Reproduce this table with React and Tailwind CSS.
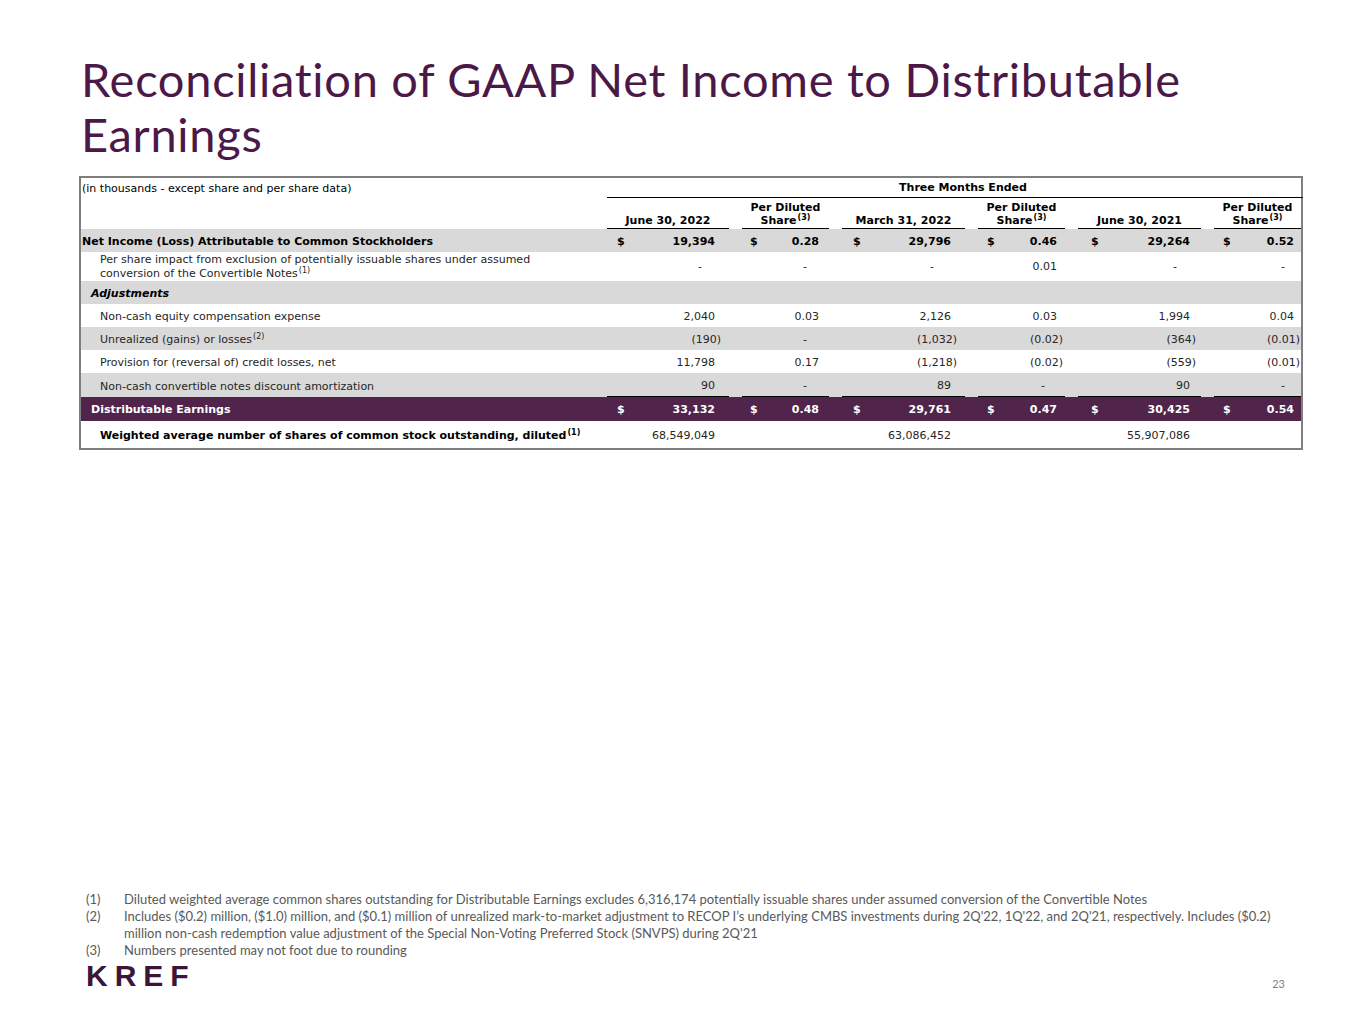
import React from "react";

const GRID =
  "grid grid-cols-[513px_122px_87px_123px_87px_123px_87px] gap-x-[13px]";

const COLS = [
  { pl: "pl-[10px]", pr: "pr-[14px]", dpr: "pr-[27px]" },
  { pl: "pl-[8px]", pr: "pr-[10px]", dpr: "pr-[22px]" },
  { pl: "pl-[11px]", pr: "pr-[14px]", dpr: "pr-[31px]" },
  { pl: "pl-[9px]", pr: "pr-[8px]", dpr: "pr-[20px]" },
  { pl: "pl-[13px]", pr: "pr-[11px]", dpr: "pr-[24px]" },
  { pl: "pl-[9px]", pr: "pr-[7px]", dpr: "pr-[16px]" },
];

function Num({ v }) {
  if (v.startsWith("(")) {
    return <span className="mr-[-6px]">{v}</span>;
  }
  return <span>{v}</span>;
}

function ValueCell({ i, v, dollar, line, pt }) {
  const c = COLS[i];
  const isDash = v === "-";
  return (
    <div
      className={`flex items-center justify-between h-full ${pt} ${c.pl} ${
        isDash ? c.dpr : c.pr
      } ${line ? "border-b-[1.5px] border-black" : ""}`}
    >
      <span>{dollar ? "$" : ""}</span>
      <Num v={v} />
    </div>
  );
}

function Row({ label, values, bg, h, labelClass, valueClass, dollar, line, children, pt = "pt-[4px]" }) {
  return (
    <div className={`${GRID} ${bg} ${h}`}>
      <div className={`flex items-center whitespace-nowrap ${pt} ${labelClass}`}>{children || label}</div>
      {values.map((v, i) => (
        <div key={i} className={valueClass}>
          <ValueCell i={i} v={v} dollar={dollar} line={line} pt={pt} />
        </div>
      ))}
    </div>
  );
}

function Sup({ children, bold }) {
  return (
    <sup className={`text-[8px] top-[-4px] ml-[1px] ${bold ? "font-bold" : "font-normal"}`}>
      {children}
    </sup>
  );
}

function HeaderCell({ children }) {
  return (
    <div className="flex flex-col justify-end items-center border-b-[1.5px] border-black pb-[1px] leading-[13px] font-bold">
      {children}
    </div>
  );
}

function PerShare() {
  return (
    <HeaderCell>
      <span>Per Diluted</span>
      <span>
        Share<Sup bold>(3)</Sup>
      </span>
    </HeaderCell>
  );
}

export default function App() {
  const empty = ["", "", "", "", "", ""];
  return (
    <div className="w-[1365px] min-h-[1024px] bg-white flex flex-col">
      <h1 className="pl-[81px] pt-[52px] text-[#4b1848] text-[47px] leading-[55px] font-[family-name:Lato,'Open_Sans',sans-serif] tracking-[0.7px] pr-[120px]">
        Reconciliation of GAAP Net Income to Distributable Earnings
      </h1>

      <div className="ml-[79px] mt-[14px] w-[1224px] border-2 border-[#7f7f7f] font-[family-name:'DejaVu_Sans',Verdana,sans-serif] text-[11px] text-black">
        {/* header row 1 */}
        <div className={`${GRID} h-[19px]`}>
          <div className="flex items-center pl-[1px] pt-[2px] text-[11px] whitespace-nowrap">
            (in thousands - except share and per share data)
          </div>
          <div className="col-span-6 flex items-center justify-center font-bold border-b-[1.5px] border-black mr-[-2px] pl-[16px] pt-[2px]">
            Three Months Ended
          </div>
        </div>
        {/* header row 2 */}
        <div className={`${GRID} h-[32px]`}>
          <div />
          <HeaderCell>June 30, 2022</HeaderCell>
          <PerShare />
          <HeaderCell>March 31, 2022</HeaderCell>
          <PerShare />
          <HeaderCell>June 30, 2021</HeaderCell>
          <PerShare />
        </div>

        <Row
          label="Net Income (Loss) Attributable to Common Stockholders"
          values={["19,394", "0.28", "29,796", "0.46", "29,264", "0.52"]}
          bg="bg-[#d9d9d9]"
          h="h-[23px]"
          labelClass="pl-[1px] font-bold"
          valueClass="font-bold"
          dollar
        />
        <Row
          values={["-", "-", "-", "0.01", "-", "-"]}
          bg="bg-white"
          h="h-[29px]"
          labelClass="pl-[19px] leading-[14px] text-[#262626]"
          valueClass="text-[#262626]"
          pt="pt-[1px]"
        >
          <div>
            Per share impact from exclusion of potentially issuable shares under assumed
            <br />
            conversion of the Convertible Notes<Sup>(1)</Sup>
          </div>
        </Row>
        <Row
          label="Adjustments"
          values={empty}
          bg="bg-[#d9d9d9]"
          h="h-[23px]"
          labelClass="pl-[10px] font-bold italic"
        />
        <Row
          label="Non-cash equity compensation expense"
          values={["2,040", "0.03", "2,126", "0.03", "1,994", "0.04"]}
          bg="bg-white"
          h="h-[23px]"
          labelClass="pl-[19px] text-[#262626]"
          valueClass="text-[#262626]"
        />
        <Row
          values={["(190)", "-", "(1,032)", "(0.02)", "(364)", "(0.01)"]}
          bg="bg-[#d9d9d9]"
          h="h-[23px]"
          labelClass="pl-[19px] text-[#262626]"
          valueClass="text-[#262626]"
        >
          <span>
            Unrealized (gains) or losses<Sup>(2)</Sup>
          </span>
        </Row>
        <Row
          label="Provision for (reversal of) credit losses, net"
          values={["11,798", "0.17", "(1,218)", "(0.02)", "(559)", "(0.01)"]}
          bg="bg-white"
          h="h-[23px]"
          labelClass="pl-[19px] text-[#262626]"
          valueClass="text-[#262626]"
        />
        <Row
          label="Non-cash convertible notes discount amortization"
          values={["90", "-", "89", "-", "90", "-"]}
          bg="bg-[#d9d9d9]"
          h="h-[24px]"
          labelClass="pl-[19px] text-[#262626]"
          valueClass="text-[#262626]"
          line
        />
        <Row
          label="Distributable Earnings"
          values={["33,132", "0.48", "29,761", "0.47", "30,425", "0.54"]}
          bg="bg-[#50244b]"
          h="h-[24px]"
          labelClass="pl-[10px] font-bold text-white"
          valueClass="font-bold text-white"
          dollar
          pt="pt-[2px]"
        />
        <Row
          values={["68,549,049", "", "63,086,452", "", "55,907,086", ""]}
          bg="bg-white"
          h="h-[27px]"
          labelClass="pl-[19px] font-bold"
          valueClass="text-[#262626]"
        >
          <span>
            Weighted average number of shares of common stock outstanding, diluted
            <Sup bold>(1)</Sup>
          </span>
        </Row>
      </div>

      <div className="flex-1" />

      <div className="pl-[86px] pr-[70px] font-[family-name:Lato,'Open_Sans',sans-serif] text-[13px] leading-[17px] text-[#595959]">
        <div className="flex">
          <span className="w-[38px] shrink-0">(1)</span>
          <span>
            Diluted weighted average common shares outstanding for Distributable Earnings excludes 6,316,174 potentially issuable shares under assumed conversion of the Convertible Notes
          </span>
        </div>
        <div className="flex">
          <span className="w-[38px] shrink-0">(2)</span>
          <span>
            Includes ($0.2) million, ($1.0) million, and ($0.1) million of unrealized mark-to-market adjustment to RECOP I’s underlying CMBS investments during 2Q'22, 1Q'22, and 2Q'21, respectively. Includes ($0.2) million non-cash redemption value adjustment of the Special Non-Voting Preferred Stock (SNVPS) during 2Q'21
          </span>
        </div>
        <div className="flex">
          <span className="w-[38px] shrink-0">(3)</span>
          <span>Numbers presented may not foot due to rounding</span>
        </div>
      </div>

      <div className="flex items-end justify-between pl-[86px] pr-[80px] pb-[37px] pt-[6px]">
        <span className="font-[family-name:'Liberation_Sans',Arial,sans-serif] font-bold text-[30px] leading-[22px] tracking-[7px] text-[#3b1639]">
          KREF
        </span>
        <span className="font-[family-name:Lato,sans-serif] text-[11px] text-[#7f7f7f] leading-none mb-[-2px]">
          23
        </span>
      </div>
    </div>
  );
}
